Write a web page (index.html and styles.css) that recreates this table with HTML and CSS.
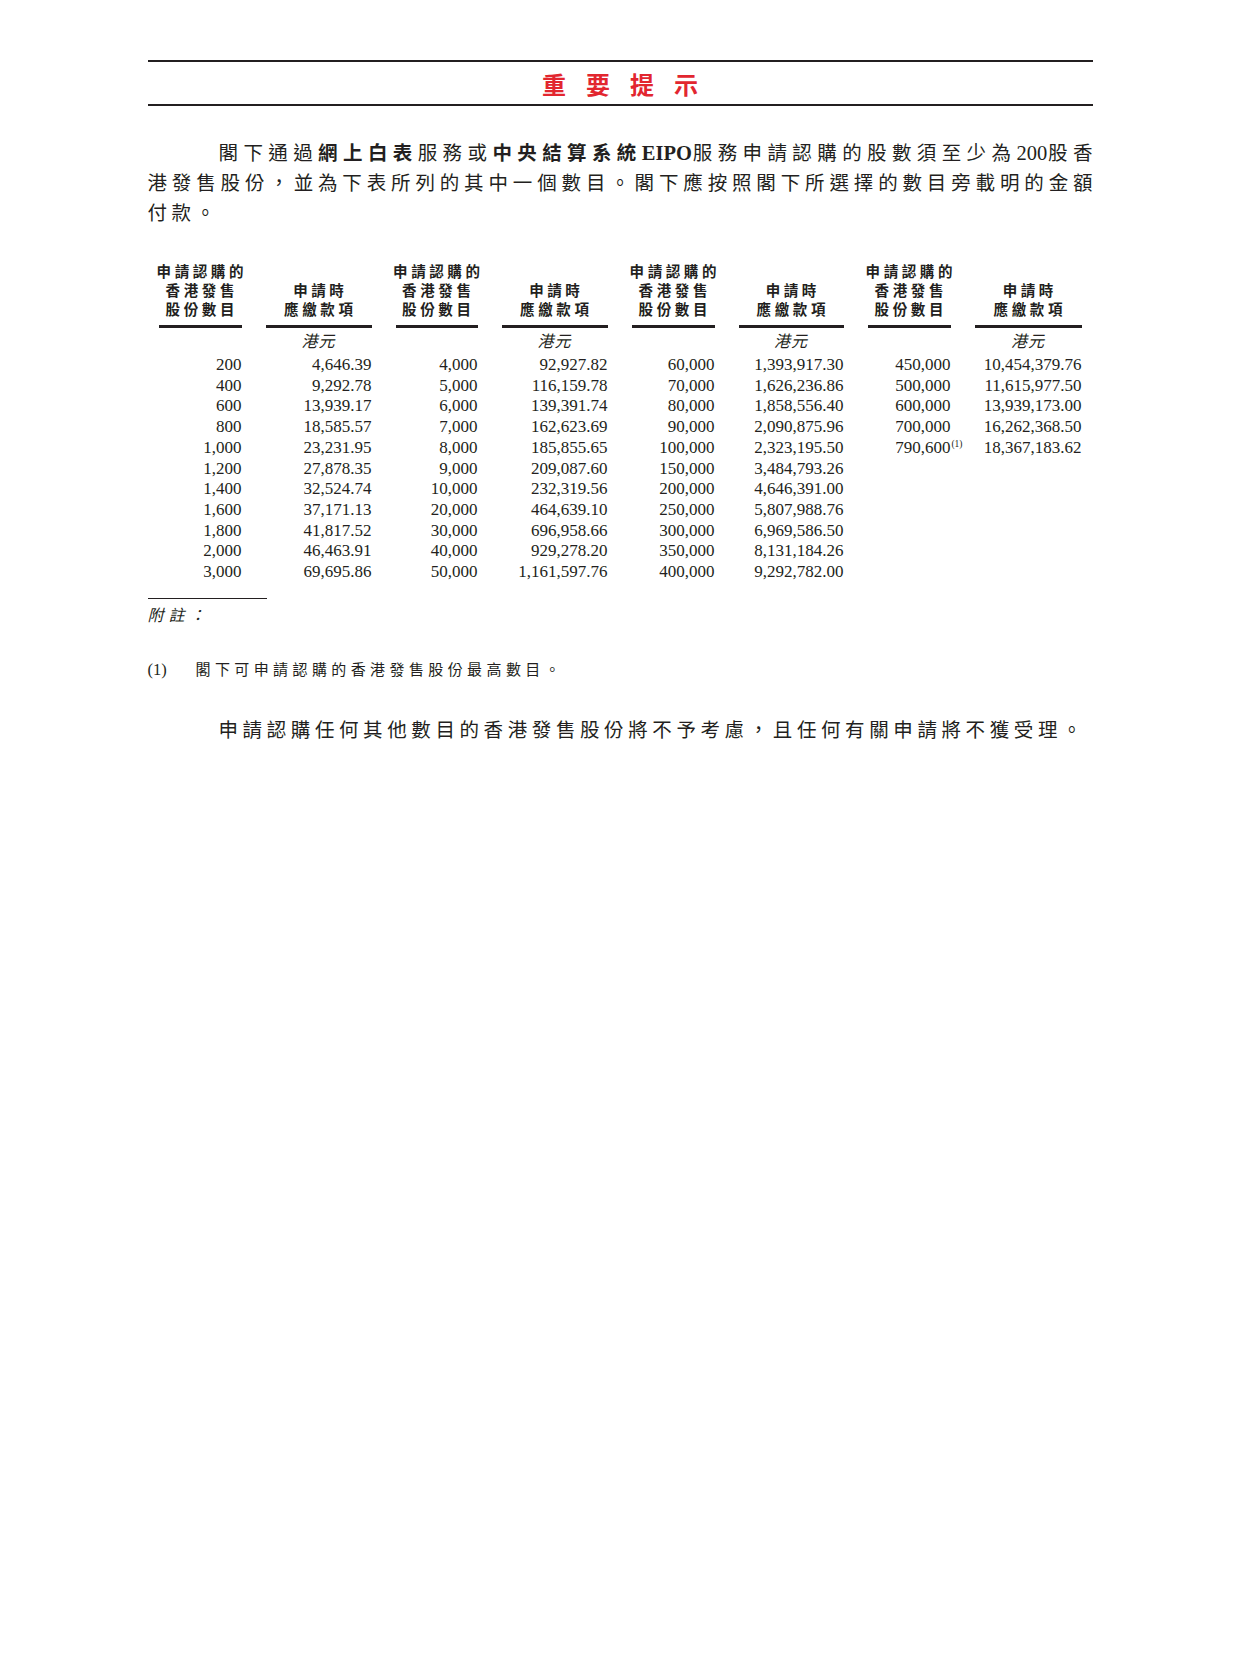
FILE: index.html
```html
<!DOCTYPE html>
<html lang="zh-Hant">
<head>
<meta charset="utf-8">
<title>重要提示</title>
<link rel="stylesheet" href="styles.css">
</head>
<body>
<main class="page">
  <header class="banner"><h1 class="banner-title">重要提示</h1></header>

  <p class="intro">
    <span class="line line-first">閣下通過<b>網上白表</b>服務或<b>中央結算系統<span class="lat">EIPO</span></b>服務申請認購的股數須至少為<span class="lat">200</span>股香</span>
    <span class="line line-mid">港發售股份，並為下表所列的其中一個數目。閣下應按照閣下所選擇的數目旁載明的金額</span>
    <span class="line">付款。</span>
  </p>

  <div class="quota">
    <div class="qh"><span>申請認購的</span><span>香港發售</span><span>股份數目</span></div>
    <div class="qh"><span>申請時</span><span>應繳款項</span></div>
    <div class="qh"><span>申請認購的</span><span>香港發售</span><span>股份數目</span></div>
    <div class="qh"><span>申請時</span><span>應繳款項</span></div>
    <div class="qh"><span>申請認購的</span><span>香港發售</span><span>股份數目</span></div>
    <div class="qh"><span>申請時</span><span>應繳款項</span></div>
    <div class="qh"><span>申請認購的</span><span>香港發售</span><span>股份數目</span></div>
    <div class="qh"><span>申請時</span><span>應繳款項</span></div>

    <div class="qu"></div><div class="qu">港元</div>
    <div class="qu"></div><div class="qu">港元</div>
    <div class="qu"></div><div class="qu">港元</div>
    <div class="qu"></div><div class="qu">港元</div>

    <div class="qd">200</div><div class="qd">4,646.39</div><div class="qd">4,000</div><div class="qd">92,927.82</div><div class="qd">60,000</div><div class="qd">1,393,917.30</div><div class="qd">450,000</div><div class="qd">10,454,379.76</div>
    <div class="qd">400</div><div class="qd">9,292.78</div><div class="qd">5,000</div><div class="qd">116,159.78</div><div class="qd">70,000</div><div class="qd">1,626,236.86</div><div class="qd">500,000</div><div class="qd">11,615,977.50</div>
    <div class="qd">600</div><div class="qd">13,939.17</div><div class="qd">6,000</div><div class="qd">139,391.74</div><div class="qd">80,000</div><div class="qd">1,858,556.40</div><div class="qd">600,000</div><div class="qd">13,939,173.00</div>
    <div class="qd">800</div><div class="qd">18,585.57</div><div class="qd">7,000</div><div class="qd">162,623.69</div><div class="qd">90,000</div><div class="qd">2,090,875.96</div><div class="qd">700,000</div><div class="qd">16,262,368.50</div>
    <div class="qd">1,000</div><div class="qd">23,231.95</div><div class="qd">8,000</div><div class="qd">185,855.65</div><div class="qd">100,000</div><div class="qd">2,323,195.50</div><div class="qd">790,600<span class="fn-ref">(1)</span></div><div class="qd">18,367,183.62</div>
    <div class="qd">1,200</div><div class="qd">27,878.35</div><div class="qd">9,000</div><div class="qd">209,087.60</div><div class="qd">150,000</div><div class="qd">3,484,793.26</div><div class="qd"></div><div class="qd"></div>
    <div class="qd">1,400</div><div class="qd">32,524.74</div><div class="qd">10,000</div><div class="qd">232,319.56</div><div class="qd">200,000</div><div class="qd">4,646,391.00</div><div class="qd"></div><div class="qd"></div>
    <div class="qd">1,600</div><div class="qd">37,171.13</div><div class="qd">20,000</div><div class="qd">464,639.10</div><div class="qd">250,000</div><div class="qd">5,807,988.76</div><div class="qd"></div><div class="qd"></div>
    <div class="qd">1,800</div><div class="qd">41,817.52</div><div class="qd">30,000</div><div class="qd">696,958.66</div><div class="qd">300,000</div><div class="qd">6,969,586.50</div><div class="qd"></div><div class="qd"></div>
    <div class="qd">2,000</div><div class="qd">46,463.91</div><div class="qd">40,000</div><div class="qd">929,278.20</div><div class="qd">350,000</div><div class="qd">8,131,184.26</div><div class="qd"></div><div class="qd"></div>
    <div class="qd">3,000</div><div class="qd">69,695.86</div><div class="qd">50,000</div><div class="qd">1,161,597.76</div><div class="qd">400,000</div><div class="qd">9,292,782.00</div><div class="qd"></div><div class="qd"></div>
  </div>

  <div class="notes">
    <div class="notes-rule"></div>
    <div class="notes-title">附註：</div>
    <div class="note">
      <span class="note-num">(1)</span>
      <span class="note-text">閣下可申請認購的香港發售股份最高數目。</span>
    </div>
  </div>

  <p class="closing">申請認購任何其他數目的香港發售股份將不予考慮，且任何有關申請將不獲受理。</p>
</main>
</body>
</html>
```

FILE: styles.css
```css
html, body {
  margin: 0;
  padding: 0;
  background: #ffffff;
}

body {
  font-family: "Liberation Serif", "Noto Sans CJK TC", serif;
  color: #231f20;
}

.page {
  width: 945px;
  margin: 0 auto;
  padding-top: 60px;
}

/* ---------- banner ---------- */
.banner {
  height: 42px;
  border-top: 2px solid #231f20;
  border-bottom: 2px solid #231f20;
  display: flex;
  align-items: center;
  justify-content: center;
}

.banner-title {
  margin: 0 -20px 0 0;
  padding-top: 2px;
  font-family: "Noto Sans CJK TC", sans-serif;
  font-weight: 700;
  font-size: 24px;
  line-height: 40px;
  letter-spacing: 20px;
  color: #e2262f;
}

/* ---------- intro paragraph ---------- */
.intro {
  margin: 32px 0 0 0;
  font-family: "Liberation Serif", "Noto Sans CJK TC", serif;
  font-size: 19.5px;
  line-height: 30px;
  letter-spacing: 4.5px;
}

.intro .line {
  display: block;
  margin-right: -4.5px;
}

.intro .line-first,
.intro .line-mid {
  text-align: justify;
  text-align-last: justify;
}

.intro .line-first {
  text-indent: 71px;
}

.intro b {
  font-weight: 700;
}

.lat {
  font-size: 20.5px;
  letter-spacing: 0;
}

/* ---------- quota table ---------- */
.quota {
  margin-top: 32px;
  padding: 0 11px;
  display: grid;
  grid-template-columns: 83px 106px 82px 106px 83px 105px 83px 107px;
  column-gap: 24px;
}

.qh {
  align-self: end;
  display: flex;
  flex-direction: column;
  align-items: center;
  padding-bottom: 7px;
  border-bottom: 3px solid #231f20;
  font-family: "Noto Sans CJK TC", sans-serif;
  font-weight: 700;
  font-size: 14.5px;
  line-height: 19px;
  letter-spacing: 3.6px;
}

.qh span {
  white-space: nowrap;
  margin-right: -3.6px;
}

.qu {
  height: 27px;
  text-align: center;
  font-family: "Noto Sans CJK TC", sans-serif;
  font-style: italic;
  font-size: 16px;
  line-height: 24px;
  letter-spacing: 1px;
}

.qd {
  text-align: right;
  font-size: 17px;
  line-height: 20.7px;
  white-space: nowrap;
}

.fn-ref {
  display: inline-block;
  font-size: 9.5px;
  line-height: 0;
  vertical-align: 6px;
  margin-right: -12px;
  margin-left: 1px;
}

/* ---------- notes ---------- */
.notes {
  margin-top: 15px;
}

.notes-rule {
  width: 119px;
  border-top: 1px solid #231f20;
}

.notes-title {
  margin-top: 3px;
  font-family: "Noto Sans CJK TC", sans-serif;
  font-style: italic;
  font-size: 16px;
  line-height: 24px;
  letter-spacing: 5px;
}

.note {
  margin-top: 31px;
  display: flex;
  align-items: baseline;
  line-height: 24px;
}

.note-num {
  width: 48px;
  flex: none;
  font-size: 16.5px;
}

.note-text {
  font-family: "Noto Sans CJK TC", sans-serif;
  font-size: 15px;
  letter-spacing: 4.4px;
}

/* ---------- closing ---------- */
.closing {
  margin: 34px 0 0 0;
  text-indent: 71px;
  white-space: nowrap;
  font-family: "Liberation Serif", "Noto Sans CJK TC", serif;
  font-size: 19.5px;
  line-height: 30px;
  letter-spacing: 4.6px;
}
```
